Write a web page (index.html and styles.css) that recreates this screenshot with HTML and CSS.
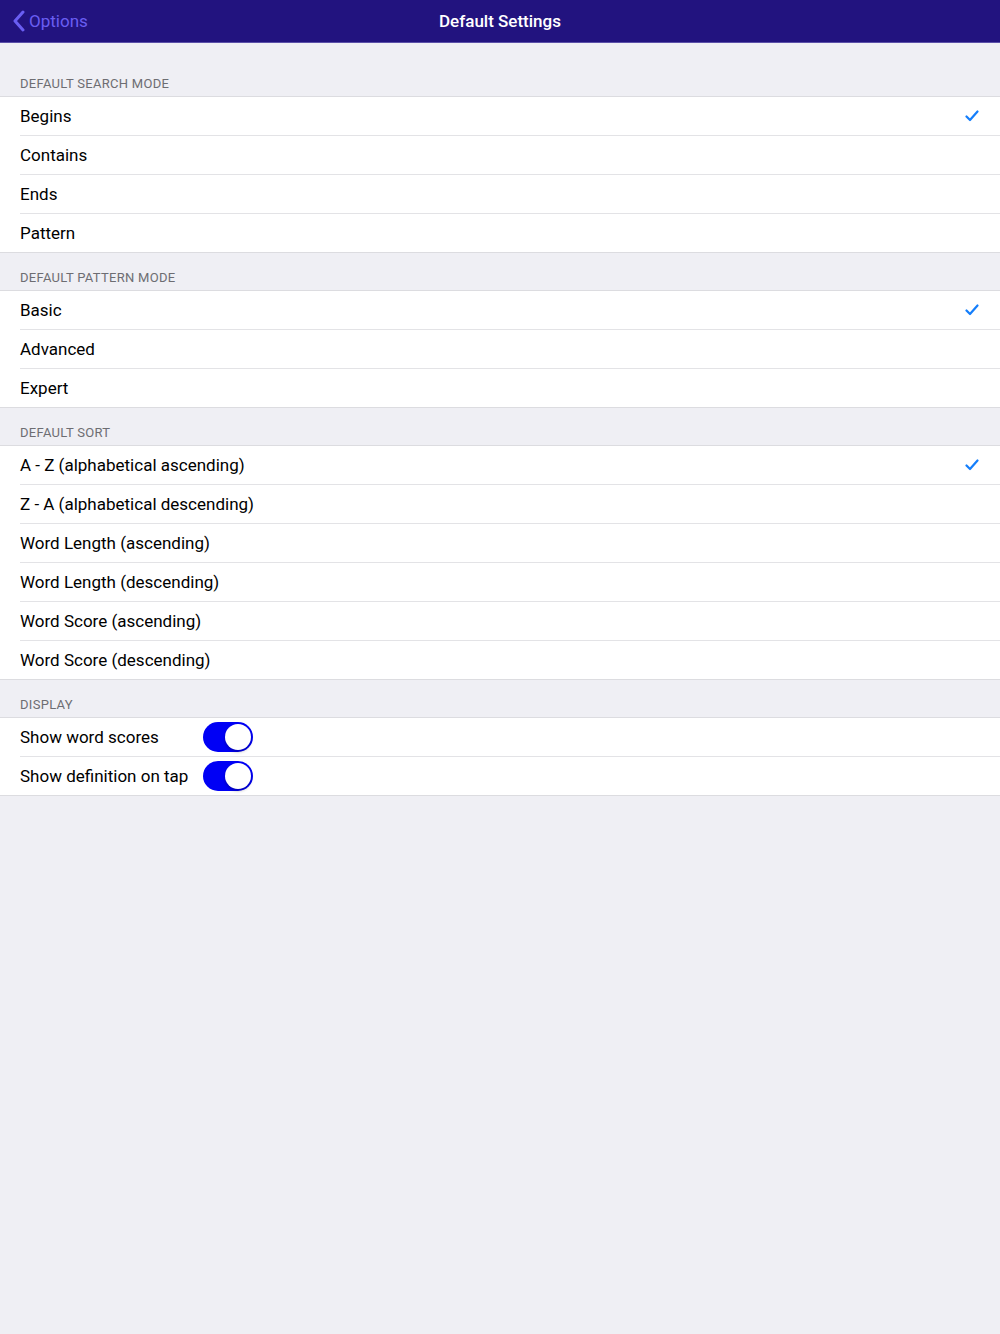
FILE: index.html
```html
<!DOCTYPE html>
<html lang="en">
<head>
    <meta charset="UTF-8">
    <title>Default Settings</title>
    <link rel="stylesheet" href="styles.css">
</head>
<body>
    <div class="navbar">
        <div class="back">
            <svg class="chevron" width="13" height="22" viewBox="0 0 13 22"><path d="M11 2 L3 11 L11 20" fill="none" stroke="currentColor" stroke-width="3" stroke-linecap="round" stroke-linejoin="round"/></svg>
            <span>Options</span>
        </div>
        <div class="title">Default Settings</div>
    </div>

    <div class="section-header first">DEFAULT SEARCH MODE</div>
    <div class="group">
        <div class="row"><span>Begins</span><span class="check"></span></div>
        <div class="row"><span>Contains</span></div>
        <div class="row"><span>Ends</span></div>
        <div class="row"><span>Pattern</span></div>
    </div>

    <div class="section-header">DEFAULT PATTERN MODE</div>
    <div class="group">
        <div class="row"><span>Basic</span><span class="check"></span></div>
        <div class="row"><span>Advanced</span></div>
        <div class="row"><span>Expert</span></div>
    </div>

    <div class="section-header">DEFAULT SORT</div>
    <div class="group">
        <div class="row"><span>A - Z (alphabetical ascending)</span><span class="check"></span></div>
        <div class="row"><span>Z - A (alphabetical descending)</span></div>
        <div class="row"><span>Word Length (ascending)</span></div>
        <div class="row"><span>Word Length (descending)</span></div>
        <div class="row"><span>Word Score (ascending)</span></div>
        <div class="row"><span>Word Score (descending)</span></div>
    </div>

    <div class="section-header">DISPLAY</div>
    <div class="group">
        <div class="row switch-row"><span class="label">Show word scores</span><span class="toggle"></span></div>
        <div class="row switch-row"><span class="label">Show definition on tap</span><span class="toggle"></span></div>
    </div>

    <script>
        // checkmark svg for selected rows
        document.querySelectorAll('.check').forEach(function (el) {
            el.innerHTML = '<svg width="14" height="12" viewBox="0 0 14 12"><path d="M1.5 6.5 L5 10 L12.5 1.5" fill="none" stroke="#147efb" stroke-width="2.2" stroke-linecap="round" stroke-linejoin="round"/></svg>';
        });
    </script>
</body>
</html>
```

FILE: styles.css
```css
body {
    margin: 0;
    font-family: 'Roboto', 'Inter', sans-serif;
    background: #efeff4;
    color: #000;
    min-height: 1334px;
}
.navbar {
    position: relative;
    height: 43px;
    background: #22137f;
    border-bottom: 1px solid #5b50a8;
    box-sizing: border-box;
    display: flex;
    align-items: center;
    justify-content: center;
}
.back {
    position: absolute;
    left: 12px;
    top: 0;
    height: 42px;
    display: flex;
    align-items: center;
    gap: 4px;
    color: #6a5ef2;
    font-size: 17px;
}
.title {
    color: #fff;
    font-size: 17px;
    font-weight: 500;
}
.section-header {
    height: 37px;
    box-sizing: border-box;
    padding: 0 20px 5px;
    display: flex;
    align-items: flex-end;
    font-size: 13px;
    color: #6d6d72;
    letter-spacing: 0.3px;
}
.section-header.first {
    height: 53px;
}
.group {
    background: #fff;
    border-top: 1px solid #dcdce0;
    border-bottom: 1px solid #dcdce0;
}
.row {
    height: 39px;
    margin-left: 20px;
    padding-right: 20px;
    display: flex;
    align-items: center;
    justify-content: space-between;
    font-size: 17px;
    box-sizing: border-box;
    border-bottom: 1px solid #e3e3e6;
}
.row:last-child {
    border-bottom: none;
    height: 38px;
}
.check {
    display: flex;
    margin-right: 1px;
}
.switch-row {
    justify-content: flex-start;
}
.label {
    width: 183px;
}
.toggle {
    position: relative;
    width: 50px;
    height: 30px;
    border-radius: 15px;
    background: #0000f5;
}
.toggle::after {
    content: "";
    position: absolute;
    right: 2px;
    top: 2px;
    width: 26px;
    height: 26px;
    border-radius: 50%;
    background: #fff;
    box-shadow: 0 2px 3px rgba(0, 0, 0, 0.25);
}
```
